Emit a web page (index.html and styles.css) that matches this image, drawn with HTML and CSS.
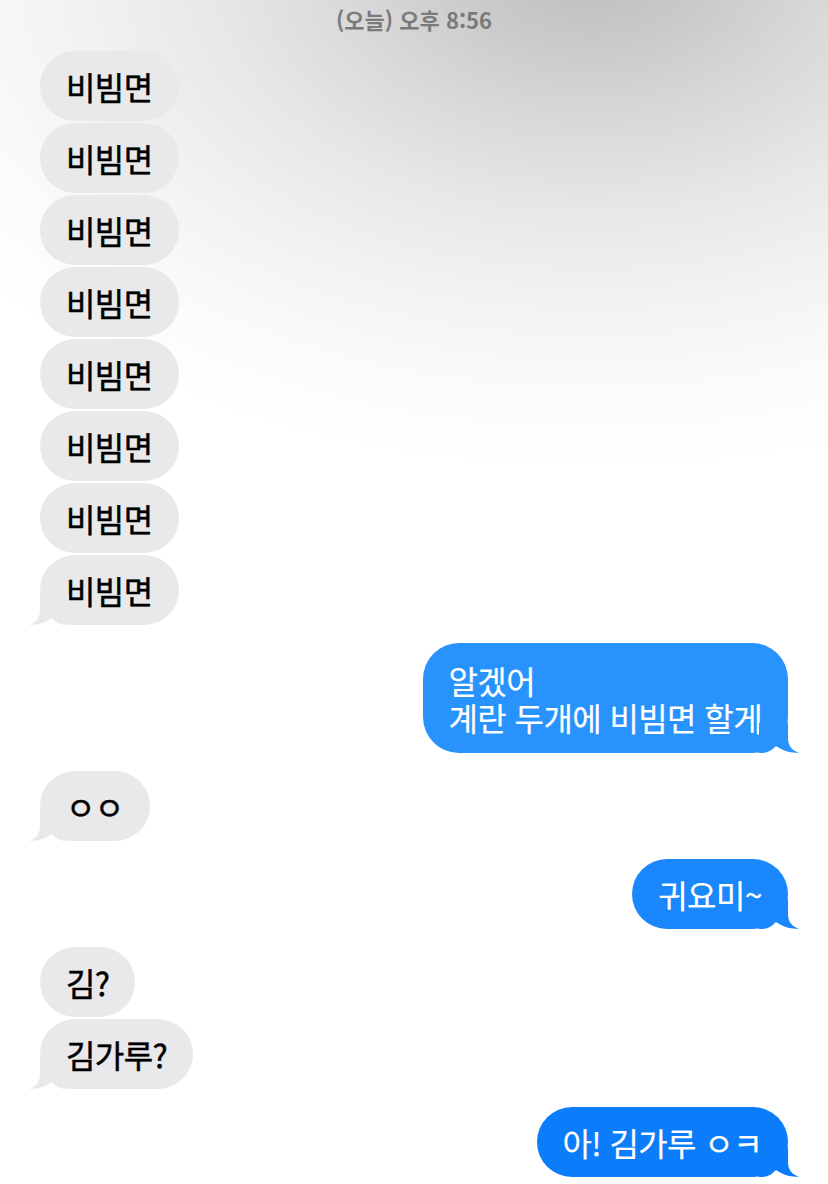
FILE: index.html
```html
<!DOCTYPE html>
<html lang="ko">
<head>
<meta charset="utf-8">
<title>메시지</title>
<link rel="stylesheet" href="styles.css">
</head>
<body>
<div class="screen">
  <div class="stamp">(오늘) 오후 8:56</div>
  <div class="thread">
    <div class="group in">
      <div class="bubble gray">비빔면</div>
      <div class="bubble gray">비빔면</div>
      <div class="bubble gray">비빔면</div>
      <div class="bubble gray">비빔면</div>
      <div class="bubble gray">비빔면</div>
      <div class="bubble gray">비빔면</div>
      <div class="bubble gray">비빔면</div>
      <div class="bubble gray tail">비빔면<svg class="tail-svg" viewBox="0 0 41 30" width="41" height="30"><path d="M12 0 L12 15 C12 23 8 27.5 1 29.5 C8 30.5 17 28 24 23 C28 27 32 30 38 30 L41 30 L41 0 Z"/></svg></div>
    </div>
    <div class="group out">
      <div class="bubble blue blue1 multi tail"><span class="line">알겠어</span><span class="line">계란 두개에 비빔면 할게</span><svg class="tail-svg" viewBox="0 0 41 30" width="41" height="30"><path d="M12 0 L12 15 C12 23 8 27.5 1 29.5 C8 30.5 17 28 24 23 C28 27 32 30 38 30 L41 30 L41 0 Z"/></svg></div>
    </div>
    <div class="group in">
      <div class="bubble gray tail">ㅇㅇ<svg class="tail-svg" viewBox="0 0 41 30" width="41" height="30"><path d="M12 0 L12 15 C12 23 8 27.5 1 29.5 C8 30.5 17 28 24 23 C28 27 32 30 38 30 L41 30 L41 0 Z"/></svg></div>
    </div>
    <div class="group out">
      <div class="bubble blue blue2 tail">귀요미~<svg class="tail-svg" viewBox="0 0 41 30" width="41" height="30"><path d="M12 0 L12 15 C12 23 8 27.5 1 29.5 C8 30.5 17 28 24 23 C28 27 32 30 38 30 L41 30 L41 0 Z"/></svg></div>
    </div>
    <div class="group in">
      <div class="bubble gray">김?</div>
      <div class="bubble gray tail">김가루?<svg class="tail-svg" viewBox="0 0 41 30" width="41" height="30"><path d="M12 0 L12 15 C12 23 8 27.5 1 29.5 C8 30.5 17 28 24 23 C28 27 32 30 38 30 L41 30 L41 0 Z"/></svg></div>
    </div>
    <div class="group out">
      <div class="bubble blue blue3 tail">아! 김가루 ㅇㅋ<svg class="tail-svg" viewBox="0 0 41 30" width="41" height="30"><path d="M12 0 L12 15 C12 23 8 27.5 1 29.5 C8 30.5 17 28 24 23 C28 27 32 30 38 30 L41 30 L41 0 Z"/></svg></div>
    </div>
  </div>
</div>
</body>
</html>
```

FILE: styles.css
```css
html, body {
  margin: 0;
  padding: 0;
}
body {
  background: #ffffff;
  font-family: "Noto Sans CJK KR", "Noto Sans", sans-serif;
}
.screen {
  width: 828px;
  height: 1184px;
  overflow: hidden;
  background:
    radial-gradient(ellipse 780px 500px at 590px -30px,
      #bdbdbd 0%, #c9c9c9 14%, #d8d8d8 30%, #e7e7e7 48%, #f2f2f2 66%, #fafafa 83%, rgba(255,255,255,0) 100%),
    #ffffff;
}
.stamp {
  text-align: center;
  color: #7a7a7a;
  font-size: 22px;
  font-weight: 700;
  line-height: 28px;
  padding-top: 5px;
  height: 28px;
}
.thread {
  display: flex;
  flex-direction: column;
  gap: 18px;
  padding: 18px 40px 0 40px;
}
.group {
  display: flex;
  flex-direction: column;
  gap: 2px;
}
.group.in { align-items: flex-start; }
.group.out { align-items: flex-end; }
.bubble {
  position: relative;
  font-size: 32px;
  font-weight: 400;
  letter-spacing: -0.6px;
  line-height: 38px;
  padding: 16px 26px;
  border-radius: 35px;
  white-space: nowrap;
}
.bubble.multi {
  display: flex;
  flex-direction: column;
  padding: 19px 26px 17px;
  border-radius: 36px;
}
.line {
  display: block;
  height: 37px;
  line-height: 37px;
}
.gray {
  background: #e9e9eb;
  color: #000000;
  -webkit-text-stroke: 0.5px #000000;
}
.blue {
  color: #ffffff;
  -webkit-text-stroke: 0.2px #ffffff;
}
.blue1 { background: #2892fd; }
.blue2 { background: #1a87fc; }
.blue3 { background: #0b7cfa; }
.tail-svg {
  position: absolute;
  bottom: 0;
  left: -12px;
  display: block;
}
.gray .tail-svg path { fill: #e9e9eb; }
.out .tail-svg {
  left: auto;
  right: -12px;
  transform: scaleX(-1);
}
.blue1 .tail-svg path { fill: #2892fd; }
.blue2 .tail-svg path { fill: #1a87fc; }
.blue3 .tail-svg path { fill: #0b7cfa; }
```
